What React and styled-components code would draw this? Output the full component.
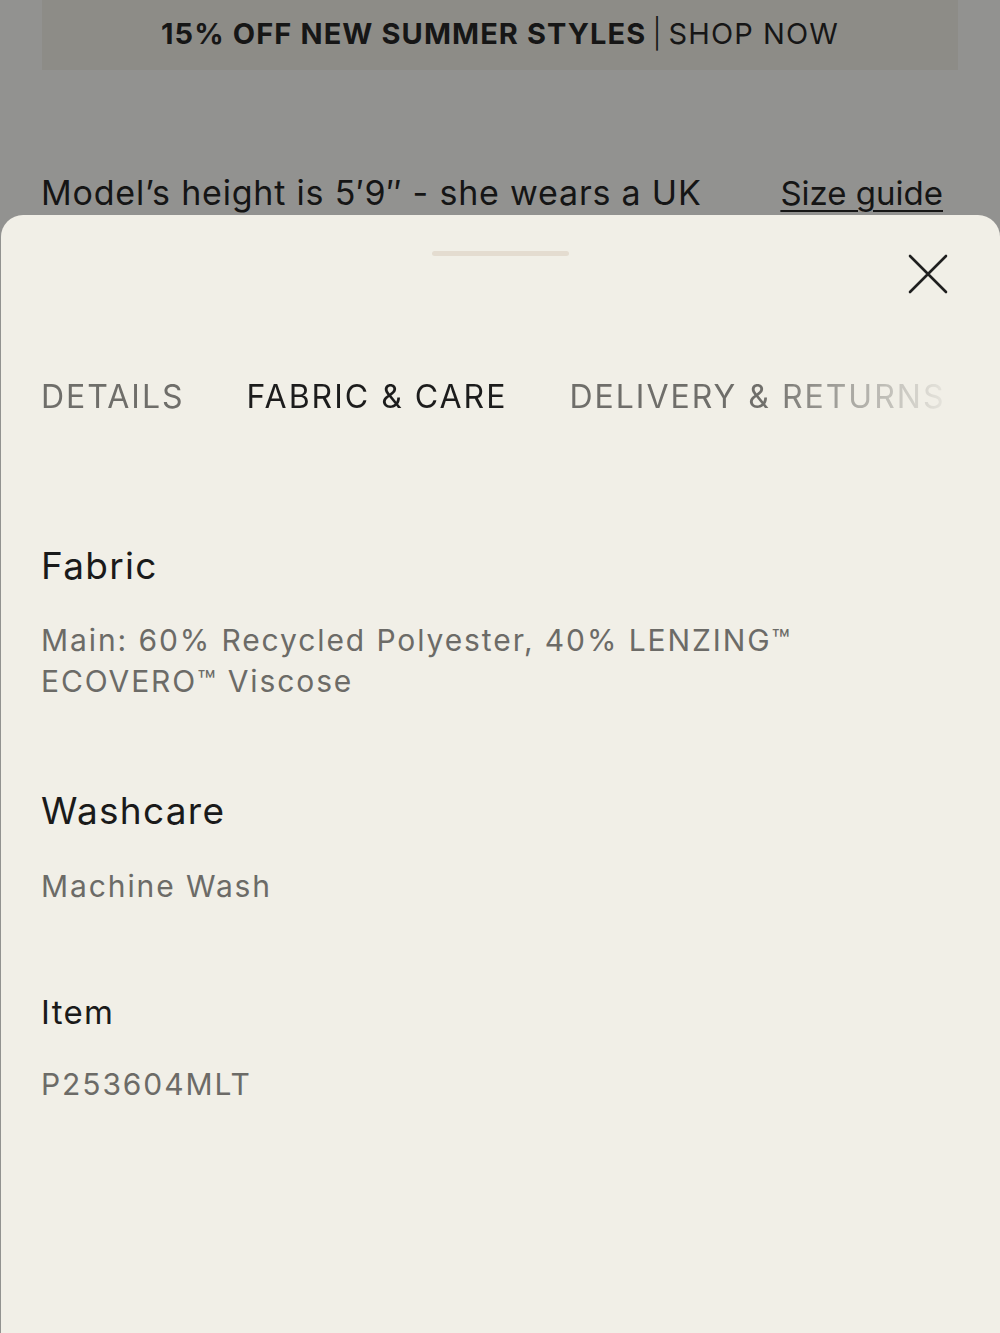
import styled, { createGlobalStyle } from "styled-components";

const GlobalStyle = createGlobalStyle`
  html, body {
    margin: 0;
    padding: 0;
    background: #929290;
  }
  body {
    font-family: Inter, "Noto Sans", sans-serif;
    -webkit-font-smoothing: antialiased;
  }
`;

const Page = styled.div`
  position: relative;
  width: 1000px;
  height: 1333px;
  overflow: hidden;
  background: #929290;
`;

const Promo = styled.div`
  margin: 0 42px;
  height: 70px;
  padding-bottom: 4px;
  box-sizing: border-box;
  display: flex;
  align-items: center;
  justify-content: center;
  background: #8d8c87;
  font-size: 29px;
  color: #161616;
  letter-spacing: 1.1px;
`;

const PromoStrong = styled.span`
  font-weight: 700;
`;

const PromoDivider = styled.span`
  margin: 0 6px;
  font-weight: 300;
`;

const PromoLink = styled.span`
  font-weight: 400;
`;

const ModelRow = styled.div`
  display: flex;
  justify-content: space-between;
  align-items: baseline;
  padding: 0 57px 0 41px;
  margin-top: 102px;
  font-size: 34px;
  letter-spacing: 0.8px;
  color: #151515;
`;

const SizeGuide = styled.span`
  letter-spacing: 0;
  font-size: 33px;
  text-decoration: underline;
  text-underline-offset: 5px;
  text-decoration-thickness: 2px;
`;

const Sheet = styled.div`
  position: absolute;
  top: 215px;
  left: 1px;
  right: 0;
  bottom: 0;
  background: #f1efe7;
  border-radius: 22px 22px 0 0;
  padding: 0 40px;
`;

const Handle = styled.div`
  width: 137px;
  height: 5px;
  border-radius: 3px;
  background: #e4dcd0;
  margin: 36px auto 0;
`;

const CloseRow = styled.div`
  display: flex;
  justify-content: flex-end;
  margin-top: -2px;
  margin-right: 12px;
`;

const CloseButton = styled.button`
  width: 40px;
  height: 40px;
  padding: 0;
  border: 0;
  background: none;
  display: flex;
  align-items: center;
  justify-content: center;
`;

const Tabs = styled.div`
  display: flex;
  gap: 62px;
  margin-top: 83px;
  white-space: nowrap;
  width: 904px;
  overflow: hidden;
  -webkit-mask-image: linear-gradient(to right, #000 0, #000 720px, rgba(0,0,0,0.08) 904px);
  mask-image: linear-gradient(to right, #000 0, #000 720px, rgba(0,0,0,0.08) 904px);
`;

const Tab = styled.span`
  font-size: 32px;
  letter-spacing: 2px;
  color: ${(p) => (p.active ? "#1c1c1c" : "#6f6e6a")};
`;

const Section = styled.div`
  margin-top: ${(p) => p.gap}px;
`;

const Heading = styled.h3`
  margin: 0;
  font-weight: 400;
  font-size: ${(p) => p.size}px;
  letter-spacing: 1.3px;
  line-height: 1.2;
  color: #1a1a1a;
`;

const Body = styled.p`
  margin: ${(p) => p.gap}px 0 0;
  font-size: 30px;
  line-height: 41px;
  letter-spacing: 1.9px;
  color: #6c6b67;
  max-width: 800px;
`;

const CloseIcon = () => (
  <svg width="40" height="40" viewBox="0 0 40 40">
    <path d="M2 2 L38 38 M38 2 L2 38" stroke="#1f1f1f" strokeWidth="2.6" strokeLinecap="round" />
  </svg>
);

const App = () => {
  return (
    <>
      <GlobalStyle />
      <Page>
        <Promo>
          <PromoStrong>15% OFF NEW SUMMER STYLES</PromoStrong>
          <PromoDivider>|</PromoDivider>
          <PromoLink>SHOP NOW</PromoLink>
        </Promo>
        <ModelRow>
          <span>Model’s height is 5′9″ - she wears a UK</span>
          <SizeGuide>Size guide</SizeGuide>
        </ModelRow>
        <Sheet>
          <Handle />
          <CloseRow>
            <CloseButton aria-label="Close">
              <CloseIcon />
            </CloseButton>
          </CloseRow>
          <Tabs>
            <Tab>DETAILS</Tab>
            <Tab active>FABRIC &amp; CARE</Tab>
            <Tab>DELIVERY &amp; RETURNS</Tab>
          </Tabs>
          <Section gap={128}>
            <Heading size={37}>Fabric</Heading>
            <Body gap={32}>Main: 60% Recycled Polyester, 40% LENZING™ ECOVERO™ Viscose</Body>
          </Section>
          <Section gap={87}>
            <Heading size={37}>Washcare</Heading>
            <Body gap={32}>Machine Wash</Body>
          </Section>
          <Section gap={86}>
            <Heading size={33}>Item</Heading>
            <Body gap={32}>P253604MLT</Body>
          </Section>
        </Sheet>
      </Page>
    </>
  );
};

export default App;
